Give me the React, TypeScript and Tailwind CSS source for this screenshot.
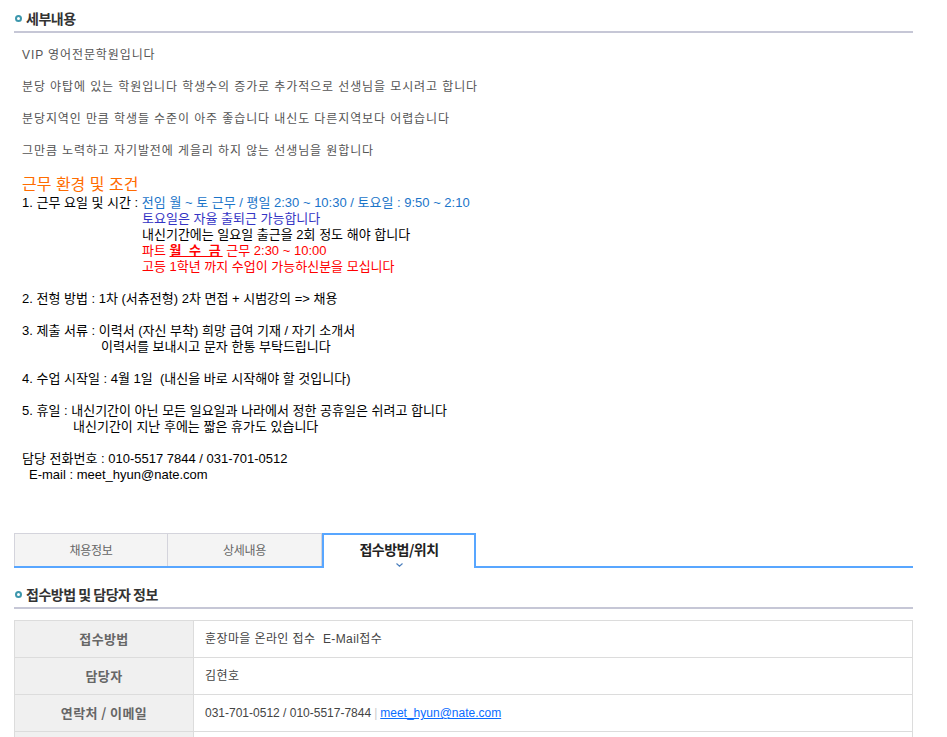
import React from 'react';

const bodyFont = "font-['Liberation_Sans','Noto_Sans_CJK_KR',sans-serif]";
const headFont = "font-['Noto_Sans_CJK_KR','Liberation_Sans',sans-serif]";

const SectionTitle: React.FC<{ title: string }> = ({ title }) => (
  <div className={`flex h-[33px] items-center gap-[4px] border-b-2 border-[#c6c7d6] pt-[5px] ${headFont}`}>
    <span className="ml-[1px] h-[7px] w-[7px] rounded-full border-2 border-[#3d97ad]" />
    <h2 className="text-[14px] font-bold tracking-[-0.5px] text-[#333]">{title}</h2>
  </div>
);

const tabs = ['채용정보', '상세내용', '접수방법/위치'];

const rows: { label: string; value: React.ReactNode }[] = [
  { label: '접수방법', value: <span className="tracking-[0.4px]">훈장마을 온라인 접수  E-Mail접수</span> },
  { label: '담당자', value: <span className="tracking-[0.4px]">김현호</span> },
  {
    label: '연락처 / 이메일',
    value: (
      <>
        031-701-0512 / 010-5517-7844
        <span className="mx-[3px] text-[#cccccc]">|</span>
        <a href="#" className="text-[#0a6cff] underline">
          meet_hyun@nate.com
        </a>
      </>
    ),
  },
  { label: '', value: '' },
];

export default function App() {
  return (
    <div className={`h-[737px] w-[947px] overflow-hidden bg-white pl-[14px] pr-[34px] ${bodyFont}`}>
      <SectionTitle title="세부내용" />

      <div className="pl-[8px] pt-[14px] text-[12px] leading-[16px] text-[#555]">
        <div className="tracking-[0.9px]">
          <p className="mb-4">VIP 영어전문학원입니다</p>
          <p className="mb-4">분당 야탑에 있는 학원입니다 학생수의 증가로 추가적으로 선생님을 모시려고 합니다</p>
          <p className="mb-4">분당지역인 만큼 학생들 수준이 아주 좋습니다 내신도 다른지역보다 어렵습니다</p>
          <p className="mb-4">그만큼 노력하고 자기발전에 게을리 하지 않는 선생님을 원합니다</p>
        </div>

        <p className="text-[16px] leading-[20px] text-[#ff6c00]">근무 환경 및 조건</p>

        <div className="text-[13px] leading-[16px] text-black">
          <div className="mb-4">
            <p>
              1. 근무 요일 및 시간 : <span className="text-[#1a74c9]">전임 월 ~ 토 근무 / 평일 2:30 ~ 10:30 / 토요일 : 9:50 ~ 2:10</span>
            </p>
            <div className="pl-[120px]">
              <p className="text-[#3434c4]">토요일은 자율 출퇴근 가능합니다</p>
              <p>내신기간에는 일요일 출근을 2회 정도 해야 합니다</p>
              <p className="text-[#ff0000]">
                파트 <span className="font-bold tracking-[2px] underline">월 수 금</span> 근무 2:30 ~ 10:00
              </p>
              <p className="text-[#ff0000]">고등 1학년 까지 수업이 가능하신분을 모십니다</p>
            </div>
          </div>

          <p className="mb-4">2. 전형 방법 : 1차 (서츄전형) 2차 면접 + 시범강의 =&gt; 채용</p>

          <div className="mb-4">
            <p>3. 제출 서류 : 이력서 (자신 부착) 희망 급여 기재 / 자기 소개서</p>
            <p className="pl-[79px]">이력서를 보내시고 문자 한통 부탁드립니다</p>
          </div>

          <p className="mb-4">4. 수업 시작일 : 4월 1일 &nbsp;(내신을 바로 시작해야 할 것입니다)</p>

          <div className="mb-4">
            <p>5. 휴일 : 내신기간이 아닌 모든 일요일과 나라에서 정한 공휴일은 쉬려고 합니다</p>
            <p className="pl-[51px]">내신기간이 지난 후에는 짧은 휴가도 있습니다</p>
          </div>

          <div>
            <p>담당 전화번호 : 010-5517 7844 / 031-701-0512</p>
            <p className="pl-[7px]">E-mail : meet_hyun@nate.com</p>
          </div>
        </div>
      </div>

      <div className={`mt-[50px] flex items-end border-b-2 border-[#58a6ff] ${headFont}`}>
        {tabs.map((t, i) =>
          i === 2 ? (
            <div
              key={t}
              className="relative z-10 -mb-[2px] flex h-[35px] w-[154px] flex-col items-center border-2 border-b-0 border-[#58a6ff] bg-white pt-[5px]"
            >
              <span className="text-[14px] font-bold leading-[18px] tracking-[-0.5px] text-[#222]">{t}</span>
              <svg className="mt-[5px]" width="7" height="4" viewBox="0 0 7 4">
                <path d="M0.5 0.5 L3.5 3.2 L6.5 0.5" fill="none" stroke="#4d7fbd" strokeWidth="1.2" />
              </svg>
            </div>
          ) : (
            <div
              key={t}
              className={`flex h-[33px] w-[154px] items-center justify-center border-t border-r border-[#d4d4dc] bg-[#f4f4f4] text-[12px] tracking-[-0.3px] text-[#666] ${
                i === 0 ? 'border-l' : ''
              }`}
            >
              {t}
            </div>
          )
        )}
      </div>

      <div className="mt-[8px]">
        <SectionTitle title="접수방법 및 담당자 정보" />
      </div>

      <div className="mt-[11px] border-t border-l border-r border-[#dcdcdc]">
        {rows.map((r, i) => (
          <div key={i} className="flex h-[37px] border-b border-[#dcdcdc]">
            <div
              className={`flex w-[179px] items-center justify-center border-r border-[#dcdcdc] bg-[#f0f0f0] text-[13px] font-bold tracking-[0.4px] text-[#666] ${headFont}`}
            >
              {r.label}
            </div>
            <div className="flex flex-1 items-center whitespace-pre pl-[11px] text-[12px] text-[#444]">{r.value}</div>
          </div>
        ))}
      </div>
    </div>
  );
}
